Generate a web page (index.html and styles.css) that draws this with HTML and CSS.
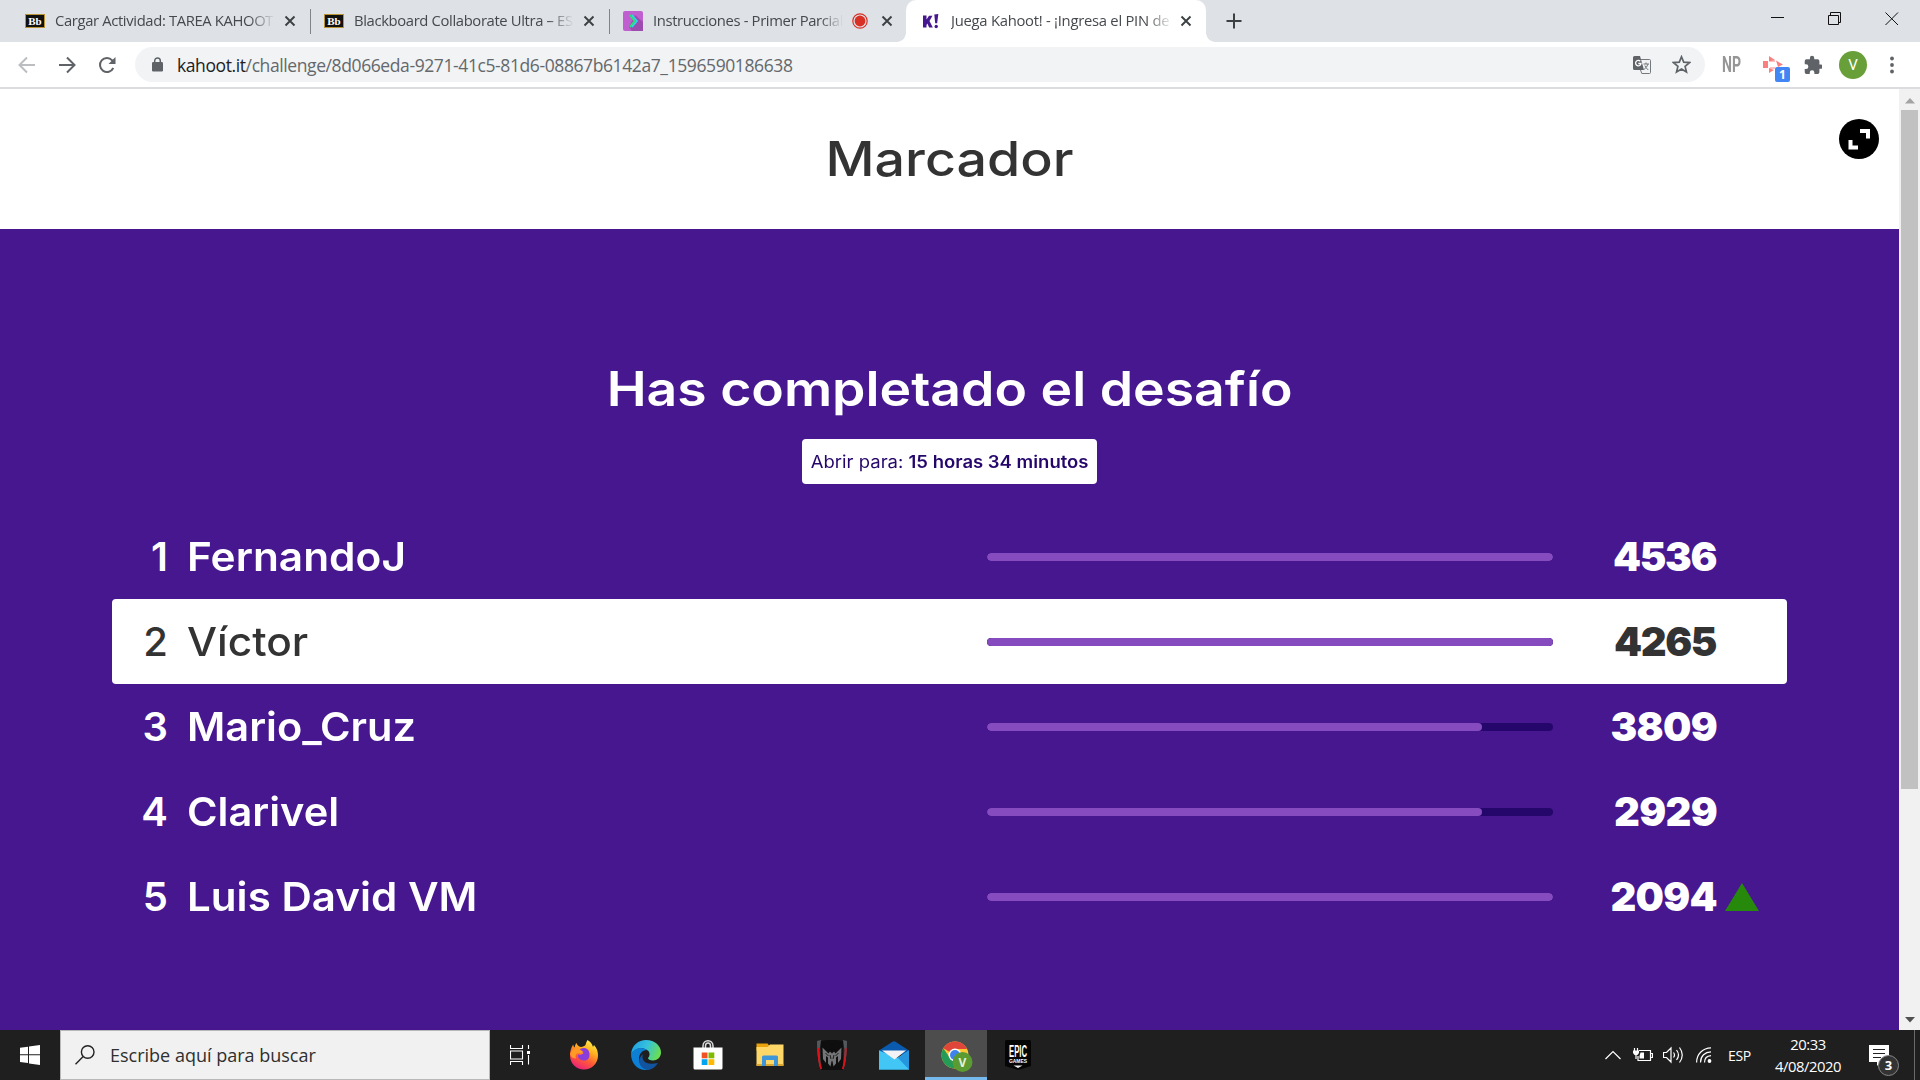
FILE: index.html
```html
<!DOCTYPE html>
<html lang="es">
<head>
<meta charset="utf-8">
<title>Juega Kahoot! - ¡Ingresa el PIN del juego!</title>
<link rel="stylesheet" href="styles.css">
</head>
<body>
<header class="tabstrip">
  <div class="tab tab-first">
    <span class="bb">Bb</span><span class="tab-title">Cargar Actividad: TAREA KAHOOT</span>
    <svg class="x" viewBox="0 0 12 12"><path d="M1.5 1.5l9 9M10.5 1.5l-9 9"/></svg>
  </div>
  <div class="tab tab-second">
    <span class="bb">Bb</span><span class="tab-title">Blackboard Collaborate Ultra – ES</span>
    <svg class="x" viewBox="0 0 12 12"><path d="M1.5 1.5l9 9M10.5 1.5l-9 9"/></svg>
  </div>
  <div class="tab tab-third">
    <svg class="fav" viewBox="0 0 20 20"><rect width="20" height="20" rx="2" fill="#c05fd0"/><path d="M12 4l8 7v9H9l-3-4z" fill="#9c4cae"/><path d="M7 4l5 6-5 6" fill="none" stroke="#2be070" stroke-width="2"/><path d="M9 4l5 6-5 6" fill="none" stroke="#2fd4f5" stroke-width="1.6"/></svg>
    <span class="tab-title">Instrucciones - Primer Parcial</span>
    <svg class="rec" viewBox="0 0 16 16"><circle cx="8" cy="8" r="7.2" fill="none" stroke="#d93025" stroke-width="1.2"/><circle cx="8" cy="8" r="5.4" fill="#d93025"/></svg>
    <svg class="x" viewBox="0 0 12 12"><path d="M1.5 1.5l9 9M10.5 1.5l-9 9"/></svg>
  </div>
  <div class="tab tab-active">
    <svg class="kfav" viewBox="0 0 16 15"><path d="M0 1.500h3.500v4L6 1.700h3.500L6.500 7l3.300 6.500H6.200L4.300 9.600l-.8 1.300v2.600H0z" fill="#46178f"/><path d="M11.300.6l4-.6-1.100 9.300h-2z" fill="#46178f"/><circle cx="13.200" cy="12.500" r="1.700" fill="#46178f"/></svg>
    <span class="tab-title">Juega Kahoot! - ¡Ingresa el PIN de</span>
    <svg class="x" viewBox="0 0 12 12"><path d="M1.500 1.500l9 9M10.500 1.500l-9 9"/></svg>
  </div>
  <svg class="plus" viewBox="0 0 16 16"><path d="M8 .5v15M.5 8h15"/></svg>
  <div class="window-buttons">
    <svg viewBox="0 0 14 14"><path d="M0 5.500h13"/></svg>
    <svg viewBox="0 0 14 14"><path d="M.5 3.500h10v9h-10zM2.500 3.500v-3h10v10h-2"/></svg>
    <svg viewBox="0 0 14 14"><path d="M.5.5l12.500 12.500M13 .5L.5 13"/></svg>
  </div>
</header>

<nav class="toolbar">
  <svg class="nav-icon faded" viewBox="0 0 18 18"><path d="M17 9H2M9 1.500L1.500 9 9 16.500"/></svg>
  <svg class="nav-icon" viewBox="0 0 18 18"><path d="M1 9h15M9 1.500L16.500 9 9 16.500"/></svg>
  <svg class="nav-icon" viewBox="0 0 18 18"><path d="M15.300 12A7 7 0 1 1 14.200 4.300L16 6.200"/><path d="M17.500 1v7h-7z" fill="#5f6368" stroke="none"/></svg>
  <div class="omnibox">
    <svg class="lock" viewBox="0 0 11 15"><rect y="5" width="11" height="9.500" rx="1.300" fill="#5f6368"/><path d="M2.700 6V3.700a2.800 2.800 0 0 1 5.600 0V6" fill="none" stroke="#5f6368" stroke-width="1.500"/></svg>
    <span class="url"><b>kahoot.it</b>/challenge/8d066eda-9271-41c5-81d6-08867b6142a7_1596590186638</span>
    <svg class="translate" viewBox="0 0 18 18"><path d="M8 3.500h8.500a1 1 0 0 1 1 1v12a1 1 0 0 1-1 1H8.800L7.500 14" fill="none" stroke="#74787c"/><path d="M1.500 0H7l4 14H1.500A1.500 1.500 0 0 1 0 12.500v-11A1.500 1.500 0 0 1 1.500 0z" fill="#5f6368"/><path d="M7.300 5.300A2.700 2.700 0 1 0 8 7.500H5.300" fill="none" stroke="#fff" stroke-width="1.300"/><path d="M10.500 8h5.500M13 6.500V8M15 8q-.8 3.200-4 5.500M11.800 9.500q1 2.500 3.500 4.500" fill="none" stroke="#74787c"/></svg>
    <svg class="star" viewBox="0 0 18 18"><path d="M9 1.700l2.100 5.100 5.500.4-4.200 3.600 1.300 5.300L9 13.200l-4.700 2.900 1.300-5.300L1.400 7.200l5.500-.4z" fill="none" stroke="#5f6368" stroke-width="1.600"/></svg>
  </div>
  <span class="np">NP</span>
  <div class="ext">
    <svg viewBox="0 0 20 18"><path d="M0 5h5v7H0zM6 0l6 4-6 1.500zM13 4.500l7 4-5 2.500zM6 12l5 2-5 3z" fill="#fa8080"/><path d="M7 5l5 0M7 12h5" stroke="#fa8080"/></svg>
    <span class="ext-badge">1</span>
  </div>
  <svg class="puzzle" viewBox="0 0 22 22"><path d="M20.500 11H19V7a2 2 0 0 0-2-2h-4V3.500a2.500 2.500 0 0 0-5 0V5H4a2 2 0 0 0-2 2v3.800h1.500a2.700 2.700 0 0 1 0 5.400H2V20a2 2 0 0 0 2 2h3.800v-1.500a2.700 2.700 0 0 1 5.400 0V22H17a2 2 0 0 0 2-2v-4h1.500a2.500 2.500 0 0 0 0-5z" fill="#5f6368"/></svg>
  <span class="avatar">V</span>
  <svg class="dots" viewBox="0 0 4 18"><circle cx="2" cy="2.500" r="1.900"/><circle cx="2" cy="9" r="1.900"/><circle cx="2" cy="15.500" r="1.900"/></svg>
</nav>

<div class="viewport">
  <main class="page">
    <section class="page-head">
      <h1>Marcador</h1>
      <button class="fullscreen" aria-label="Pantalla completa"><svg viewBox="0 0 40 40"><path d="M21 10h10v9.500h-4v-5.500h-6zM9.500 21h4v5.500h5.500v4H9.500z" fill="#fff"/></svg></button>
    </section>
    <section class="board">
      <h2>Has completado el desafío</h2>
      <p class="deadline"><span>Abrir para: <b>15 horas 34 minutos</b></span></p>
      <ol class="rows">
        <li class="row"><span class="rank">1</span><span class="name"><span>FernandoJ</span></span><span class="bar"><i style="width:100%"></i></span><span class="score">4536</span></li>
        <li class="row me"><span class="rank">2</span><span class="name"><span>Víctor</span></span><span class="bar"><i style="width:100%"></i></span><span class="score">4265</span></li>
        <li class="row"><span class="rank">3</span><span class="name"><span>Mario_Cruz</span></span><span class="bar"><i style="width:87.5%"></i></span><span class="score">3809</span></li>
        <li class="row"><span class="rank">4</span><span class="name"><span>Clarivel</span></span><span class="bar"><i style="width:87.5%"></i></span><span class="score">2929</span></li>
        <li class="row"><span class="rank">5</span><span class="name"><span>Luis David VM</span></span><span class="bar"><i style="width:100%"></i></span><span class="score">2094</span><svg class="up" viewBox="0 0 34 28"><path d="M17 0l17 28H0z" fill="#26890c"/></svg></li>
      </ol>
    </section>
  </main>
  <aside class="scrollbar">
    <svg viewBox="0 0 10 6"><path d="M0 5.500L5 0l5 5.500z" fill="#a3a3a3"/></svg>
    <div class="thumb"></div>
    <svg class="down" viewBox="0 0 10 6"><path d="M0 0l5 5.500L10 0z" fill="#505050"/></svg>
  </aside>
</div>

<footer class="taskbar">
  <div class="start"><svg viewBox="0 0 20 20"><path d="M0 2.800l8-1.100v7.600H0zM9 1.500L20 0v9.300H9zM0 10.300h8v7.800l-8-1.100zM9 10.300h11V20L9 18.400z" fill="#fff"/></svg></div>
  <div class="search">
    <svg viewBox="0 0 20 20"><circle cx="12.700" cy="7" r="6.300"/><path d="M8.200 11.500L.5 19.300"/></svg>
    <span>Escribe aquí para buscar</span>
  </div>
  <div class="slot first-slot"><svg class="taskview" viewBox="0 0 20 20"><path d="M.5 0v3.500h12V0M.5 20v-3.500h12V20M.5 6h12v8h-12zM18.500 0v4M18.500 10v9.500"/><path d="M17 6h3v3h-3z" fill="#fff" stroke="none"/></svg></div>
  <div class="slot"><svg viewBox="0 0 30 30">
    <defs><linearGradient id="ff" x1=".8" y1="0" x2=".3" y2="1"><stop offset="0" stop-color="#fff44f"/><stop offset=".35" stop-color="#ffb01f"/><stop offset=".65" stop-color="#ff5a36"/><stop offset="1" stop-color="#e81f7f"/></linearGradient></defs>
    <path d="M18.500 0c4 2.500 5 5 5.500 7l1-2c3 3 4 7 4 10.500C29 23.500 22.700 29.500 15 29.500S1 23.500 1 15.500c0-4 1-8 3.200-11 .2 1.500.8 2.500 1.500 3C6 5.500 6.500 4 7.500 3c.5 2 2 3.500 4.500 4 2-.4 3.500-.8 4.500-2 .4-1.500 1-3.500 2-5z" fill="url(#ff)"/><path d="M10 10c4-4 11-2 10.500 5 0 4-3 6-6 5.500-4-.3-6-3-5.500-6 2 .8 4.500 0 5.500-1.500-2-.5-4-1-4.500-3z" fill="#8b3ddb"/><path d="M1 14c1 3 3 4.500 6 4.500-1-3 0-5 2-5.500 2 0 4 .5 5.500-1-2-1-3.500-4-8.500-4-2 1-4 3-5 6z" fill="#ff9a24"/></svg></div>
  <div class="slot"><svg viewBox="0 0 30 30">
    <defs><linearGradient id="ed" x1="0" y1=".2" x2="1" y2=".5"><stop offset="0" stop-color="#1f9de0"/><stop offset=".5" stop-color="#35c1df"/><stop offset="1" stop-color="#6ade50"/></linearGradient></defs>
    <path d="M0 14C1 5 7.500 0 15 0c9 0 15 6 15 12.500 0 5-4 8-8 8-3 0-5-1-5-2.500 2-2 2.500-6-1-8C11 7 4 8 0 14z" fill="url(#ed)"/><path d="M0 14c3-6 11-8 16-4-5 0-8 4-8 9 0 6 5 10 10 10.600C8 32 0 24 0 14z" fill="#0d80d5"/><path d="M12 14c-2 6 2 12 15 9-3 4.500-7 7-11 7-9-3-10-11-4-16z" fill="#1154a0"/></svg></div>
  <div class="slot"><svg viewBox="0 0 30 30"><path d="M10 9V6c0-7 10-7 10 0v3M12.500 9V6c0-4 5-4 5 0v3" fill="none" stroke="#ddd" stroke-width="1.500"/><path d="M.5 7.500h29V28a1.500 1.500 0 0 1-1.500 1.500H2A1.500 1.500 0 0 1 .5 28z" fill="#fff"/><path d="M8.700 12.500h5.800v5.800H8.700z" fill="#f05125"/><path d="M15.500 12.500h5.800v5.800h-5.800z" fill="#7fba00"/><path d="M8.700 19.200h5.800V25H8.700z" fill="#03a4ef"/><path d="M15.500 19.200h5.800V25h-5.800z" fill="#ffb900"/></svg></div>
  <div class="slot"><svg viewBox="0 0 30 30"><path d="M1.500 3.500h11l2.500 3v4H1.500z" fill="#e8a20c"/><path d="M1.500 7h11l2.500-2.500h13.500v21h-27z" fill="#ffd768"/><path d="M1.500 24h27v2h-27z" fill="#d9a730"/><path d="M7 26V17q0-1.500 1.500-1.500h13q1.500 0 1.500 1.500v9h-4v-6h-8v6z" fill="#3e95d8"/></svg></div>
  <div class="slot"><svg viewBox="0 0 30 30"><path d="M4 1q11-2.500 22 0v29H4z" fill="#0e0e0e"/><path d="M0 1l4-1-1.500 10L4 30C1 24 0 11 0 1zM30 1l-4-1 1.500 10L26 30c3-6 4-19 4-29z" fill="#55595c"/><path d="M1.300 8q0 13 3 21M28.700 8q0 13-3 21" fill="none" stroke="#e01019" stroke-width="1.700"/><path d="M5.500 7.500l6 6 1.500-2 2 2 2-2 1.500 2 6-6-.5 11.500-3 4v-7l-2 1.500v6l-2.500 3-1-5-.5-1-.5 1-1 5-2.500-3v-6l-2-1.500v7l-3-4z" fill="#747577"/><path d="M8.500 13l3 3M21.500 13l-3 3M13 15l1 4M17 15l-1 4" stroke="#1c1c1c"/></svg></div>
  <div class="slot"><svg viewBox="0 0 30 30"><path d="M0 10.500L13.500 1.700q1.500-1 3 0L30 10.500v4H0z" fill="#0a5baf"/><path d="M0 10.500L15 20l15-9.500v19H0z" fill="#35bff2"/><path d="M30 10.500L19 18l-4 2.500L30 29.500z" fill="#2595de"/><path d="M0 10.500l19 7.500L30 29.500H0z" fill="#41c6f6"/><path d="M3 10.500h24L15.500 19.500z" fill="#f3f3f5"/></svg></div>
  <div class="slot running"><svg viewBox="0 0 32 32"><circle cx="14" cy="15" r="13.500" fill="#fcc934"/><path d="M14 15L2.300 8.200A13.500 13.500 0 0 1 26 9H14z" fill="#e0453a"/><path d="M2.300 8.200A13.500 13.500 0 0 0 13 28.500L19 18H9z" fill="#249b57"/><circle cx="14" cy="15" r="6.500" fill="#fff"/><circle cx="14" cy="15" r="5" fill="#3f83ee"/><circle cx="21.500" cy="22" r="10" fill="#5c9a32"/><text x="21.500" y="26.500" class="chrome-v">V</text></svg></div>
  <div class="slot"><svg viewBox="0 0 30 30"><path d="M3.500 0h23q1.500 0 1.500 1.500V26l-13 4L2 26V1.500Q2 0 3.500 0z" fill="#050505"/><text x="15" y="16.500" class="epic" textLength="18" lengthAdjust="spacingAndGlyphs">EPIC</text><text x="15" y="22.500" class="games" textLength="18" lengthAdjust="spacingAndGlyphs">GAMES</text><path d="M10.500 25.500h9L15 28z" fill="#eee"/></svg></div>
  <div class="tray">
    <svg class="chev" viewBox="0 0 16 10"><path d="M.5 9L8 1.500 15.500 9"/></svg>
    <svg class="batt" viewBox="0 0 20 14"><path d="M6 2.500h11.500v10H5V8M17.500 5.500h2v4h-2M1.500 0v3M4.500 0v3M3 6v5"/><path d="M0 2.500h6V5L4.500 7h-3L0 5zM7.500 4.500H11v6H6.500V8z" fill="#fff" stroke="none"/></svg>
    <svg class="vol" viewBox="0 0 20 18"><path d="M.5 6.500h3L8 2v14l-4.500-4.500h-3zM10.500 6.500q2 2.500 0 5M13.500 4q4 5 0 10M16.500 1.500q5.500 7.500 0 15"/></svg>
    <svg class="wifi" viewBox="0 0 16 16"><path d="M.6 15.500C.6 7 7 1 15 .8M4.500 15.500C4.500 9 9 5 15 4.800M8.500 15.500C8.500 11.500 11 9 15 8.700"/><circle cx="13.500" cy="14" r="1.900" fill="#fff" stroke="none"/></svg>
    <span class="lang">ESP</span>
    <span class="clock">20:33<br>4/08/2020</span>
    <div class="notes"><svg viewBox="0 0 20 21"><path d="M0 0h20v17h-8l-4 4v-4H0z" fill="#fff"/><path d="M4 4.500h12M4 8.500h12M4 12.500h8" stroke="#222"/></svg><span>3</span></div>
  </div>
</footer>
</body>
</html>
```
FILE: styles.css
```css
* { box-sizing: border-box; }
body {
  margin: 0;
  width: 1920px;
  height: 1080px;
  overflow: hidden;
  display: flex;
  flex-direction: column;
  font-family: "Open Sans", "Noto Sans", sans-serif;
  background: #fff;
}
svg { display: block; flex: none; }

/* Tab strip */
.tabstrip { height: 42px; flex: none; background: #dee1e6; display: flex; align-items: center; }
.tab { position: relative; height: 42px; display: flex; align-items: center; flex: none; }
.tab-first { width: 310px; padding-left: 25px; }
.tab-second { width: 299px; padding-left: 14px; }
.tab-third { width: 297px; padding-left: 14px; }
.tab-first::after, .tab-second::after {
  content: ""; position: absolute; right: -1px; top: 9px; width: 1px; height: 25px; background: #808488;
}
.bb {
  width: 20px; height: 14px; background: #111; border: 1px solid #b89434; color: #fff;
  font: bold 11px/12px "Liberation Serif", serif; text-align: center;
}
.fav { width: 20px; height: 20px; }
.tab-title {
  width: 220px; margin-left: 10px; padding-bottom: 2px; overflow: hidden; white-space: nowrap;
  font-size: 14.8px; letter-spacing: -.36px; color: #45494d;
  -webkit-mask-image: linear-gradient(90deg, #000 88%, transparent 100%);
  mask-image: linear-gradient(90deg, #000 88%, transparent 100%);
}
.tab-third .tab-title { width: 190px; }
.x { width: 12px; height: 12px; margin-left: 9px; stroke: #3c4043; stroke-width: 1.9; }
.rec { width: 16px; height: 16px; margin-left: 9px; }
.tab-third .x { margin-left: 13px; }
.tab-active { width: 300px; padding-left: 17px; background: #fff; border-radius: 10px 10px 0 0; }
.tab-active::before, .tab-active::after {
  content: ""; position: absolute; bottom: 0; width: 9px; height: 9px;
}
.tab-active::before { left: -9px; background: radial-gradient(circle at 0 0, transparent 8.5px, #fff 9px); }
.tab-active::after { right: -9px; background: radial-gradient(circle at 100% 0, transparent 8.5px, #fff 9px); }
.kfav { width: 16px; height: 15px; }
.tab-active .tab-title { margin-left: 12px; width: 222px; letter-spacing: -.26px; }
.tab-active .x { margin-left: 7px; }
.plus { width: 16px; height: 16px; margin-left: 20px; stroke: #3c4043; stroke-width: 2; }
.window-buttons { margin: -5px 21px 0 auto; display: flex; gap: 43px; }
.window-buttons svg { width: 14px; height: 14px; fill: none; stroke: #111; stroke-width: 1; }

/* Toolbar */
.toolbar { height: 47px; flex: none; display: flex; align-items: center; padding-left: 18px; border-bottom: 2px solid #dadce0; background: #fff; }
.nav-icon { width: 18px; height: 18px; margin-right: 22px; fill: none; stroke: #5f6368; stroke-width: 2; }
.faded { stroke: #bbbdc0; }
.omnibox { width: 1570px; height: 35px; margin-left: -3px; padding: 0 14px 0 17px; border-radius: 18px; background: #f1f3f4; display: flex; align-items: center; }
.lock { width: 11px; height: 15px; }
.url { margin: 0 auto 0 14px; font-size: 17.5px; letter-spacing: -.4px; color: #64686c; white-space: nowrap; }
.url b { font-weight: 400; color: #202124; }
.translate { width: 18px; height: 18px; margin-right: 21px; }
.star { width: 19px; height: 19px; }
.np { width: 20px; margin-left: 17px; font: bold 22px/22px Roboto, sans-serif; color: #969696; transform: scaleX(.64); transform-origin: left; }
.ext { position: relative; width: 20px; height: 18px; margin-left: 21px; }
.ext svg { width: 20px; height: 18px; }
.ext-badge { position: absolute; left: 12px; top: 11px; width: 15px; height: 15px; border-radius: 2px; background: #4285f4; color: #fff; font: bold 12px/15px "Open Sans", sans-serif; text-align: center; }
.puzzle { width: 19px; height: 19px; margin-left: 20px; }
.avatar { width: 28px; height: 28px; margin-left: 17px; border-radius: 50%; background: #689f38; color: #fff; font: 15px/28px Roboto, sans-serif; text-align: center; }
.dots { width: 4px; height: 18px; margin-left: 23px; fill: #5f6368; }

/* Kahoot page */
.viewport { height: 941px; flex: none; display: flex; }
.page { width: 1899px; background: #46178f; font-family: Inter, sans-serif; color: #fff; }
.page-head { position: relative; height: 140px; background: #fff; color: #333; text-align: center; }
h1, h2 { margin: 0; font-size: 48px; line-height: 60px; font-weight: 500; white-space: nowrap; }
h1 { padding-top: 40px; transform: scaleX(1.12); }
.fullscreen { position: absolute; right: 20px; top: 30px; width: 40px; height: 40px; padding: 0; border: 0; border-radius: 50%; background: #000; }
.board { display: flex; flex-direction: column; align-items: center; padding-top: 130px; }
h2 { font-weight: 600; transform: scaleX(1.115); }
.deadline { width: 295px; height: 45px; margin: 20px 0 30px; border-radius: 4px; background: #fff; color: #25076b; display: flex; align-items: center; justify-content: center; font-size: 17px; white-space: nowrap; }
.deadline span { transform: scaleX(1.088); }
.deadline b { font-weight: 600; }
.rows { list-style: none; width: 1675px; margin: 0; padding: 0; }
.row { height: 85px; display: flex; align-items: center; border-radius: 4px; font-size: 40px; line-height: 48px; font-weight: 600; }
.me { background: #fff; color: #333; font-weight: 500; }
.rank { width: 56px; text-align: right; }
.name { width: 800px; margin: 0 0 0 19px; white-space: nowrap; }
.name span { display: inline-block; transform: scaleX(1.06); transform-origin: left; }
.row:nth-child(3) .name span, .row:nth-child(4) .name span { transform: scaleX(1.038); }
.row:nth-child(5) .name span { transform: scaleX(1.053); }
.bar { width: 566px; height: 8px; border-radius: 4px; background: #25076b; overflow: hidden; }
.bar i { display: block; height: 8px; border-radius: 4px; background: #864cbf; }
.score { width: 164px; text-align: right; font-weight: 900; letter-spacing: -.7px; }
.row:nth-child(-n+2) .score { letter-spacing: -1.4px; padding-right: 1px; }
.up { width: 34px; height: 28px; margin-left: 8px; }

.scrollbar { width: 21px; background: #f1f1f1; display: flex; flex-direction: column; align-items: center; padding: 9px 0 7px; }
.scrollbar svg { width: 10px; height: 6px; }
.thumb { width: 17px; height: 679px; margin-top: 6px; background: #c1c1c1; }
.scrollbar .down { margin-top: auto; }

/* Taskbar */
.taskbar { height: 50px; flex: none; display: flex; align-items: center; background: #1f1f1f; color: #fff; }
.start { width: 60px; padding-left: 20px; }
.start svg { width: 20px; height: 20px; }
.search { width: 430px; height: 50px; padding-left: 14px; border: 1px solid #b8b8b8; background: #f1f1f1; color: #2f2f2f; display: flex; align-items: center; gap: 15px; font-size: 18px; }
.search svg { width: 20px; height: 20px; fill: none; stroke: #222; stroke-width: 1.4; }
.slot { width: 62px; height: 50px; display: flex; align-items: center; justify-content: center; flex: none; }
.first-slot { width: 63px; padding-right: 3px; }
.slot svg { width: 30px; height: 30px; }
.slot .taskview { width: 20px; height: 20px; fill: none; stroke: #fff; stroke-width: 1.1; }
.running { background: #4d4d4d; border-bottom: 3px solid #76b9ed; padding: 5px 0 0 2px; }
.running svg { width: 32px; height: 32px; }
.chrome-v { font: bold 12px "Open Sans", sans-serif; fill: #e6f0dd; text-anchor: middle; }
.epic { font: bold 16px "Liberation Sans", sans-serif; fill: #fff; text-anchor: middle; }
.games { font: bold 5.5px "Liberation Sans", sans-serif; fill: #fff; text-anchor: middle; }
.tray { margin: 0 5px 0 auto; height: 50px; display: flex; align-items: center; border-right: 1px solid #6a6a6a; }
.tray svg { fill: none; stroke: #fff; stroke-width: 1.2; }
.chev { width: 16px; height: 10px; }
.batt { width: 20px; height: 14px; margin-left: 12px; }
.vol { width: 20px; height: 18px; margin-left: 10px; }
.wifi { width: 16px; height: 16px; margin-left: 13px; }
.lang { width: 30px; margin-left: 16px; font-size: 14px; letter-spacing: -.4px; }
.clock { width: 90px; margin-left: 5px; font-size: 14.8px; line-height: 22px; letter-spacing: -.45px; text-align: center; }
.notes { position: relative; width: 45px; height: 21px; margin-left: 16px; }
.notes svg { width: 20px; height: 21px; stroke: none; }
.notes span { position: absolute; left: 9px; top: 10px; width: 21px; height: 21px; border-radius: 50%; border: 1px solid #888; background: #333; font: bold 13px/19px "Open Sans", sans-serif; text-align: center; }
```
